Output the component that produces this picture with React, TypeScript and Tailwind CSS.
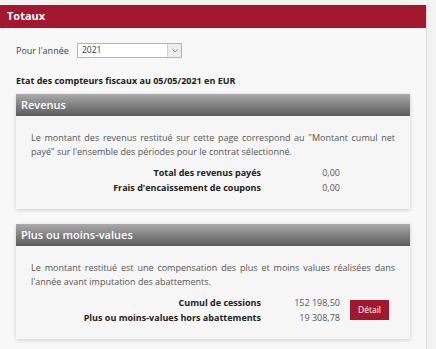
function Card({ title, children }: { title: string; children: React.ReactNode }) {
  return (
    <div className="shadow-[0_1px_4px_rgba(0,0,0,0.18)]">
      <div className="h-[22px] flex items-center px-[5px] bg-gradient-to-b from-[#ababab] to-[#5b5b5b] text-white font-semibold text-[11px]">
        {title}
      </div>
      <div className="bg-[#f6f6f6]">{children}</div>
    </div>
  );
}

function App() {
  return (
    <div className="w-[436px] h-[349px] overflow-hidden bg-[#f3f3f3] pt-[5px] text-[#333]" style={{ fontFamily: '"Open Sans", "Noto Sans", sans-serif' }}>
      <div className="w-[427px] h-[344px] bg-[#f8f8f8] border-r border-[#dcdcdc]">
        <div className="h-[23px] bg-[#a3182e] text-white font-bold text-[11px] flex items-center pl-[7px]">Totaux</div>

        <div className="px-[16px]">
          <div className="flex items-center mt-[15px] h-[15px]">
            <span className="text-[9px] text-[#444] w-[61px]">Pour l'année</span>
            <div className="w-[105px] h-[15px] border border-[#b5b5b5] bg-white flex items-center">
              <span className="flex-1 text-[8.5px] pl-[4px] text-[#333]">2021</span>
              <div className="w-[14px] h-full border-l border-[#cfcfcf] bg-[#eeeeee] flex items-center justify-center">
                <svg width="6" height="4" viewBox="0 0 6 4">
                  <path d="M0.5 0.5 L3 3 L5.5 0.5" fill="none" stroke="#888" strokeWidth="1" />
                </svg>
              </div>
            </div>
          </div>

          <div className="mt-[16px] text-[9px] font-bold text-[#222] leading-[14px]">
            Etat des compteurs fiscaux au 05/05/2021 en EUR
          </div>

          <div className="mt-[6px]">
            <Card title="Revenus">
              <div className="px-[15px] pt-[15px] pb-[14px]">
                <p className="text-[9px] leading-[14px] text-[#555] text-justify">
                  Le montant des revenus restitué sur cette page correspond au "Montant cumul net payé" sur l'ensemble des périodes pour le contrat sélectionné.
                </p>
                <div className="mt-[6px] text-[9px] leading-[15px]">
                  <div className="flex">
                    <span className="w-[230px] text-right font-bold text-[#222]">Total des revenus payés</span>
                    <span className="w-[79px] text-right text-[#555]">0,00</span>
                  </div>
                  <div className="flex">
                    <span className="w-[230px] text-right font-bold text-[#222]">Frais d'encaissement de coupons</span>
                    <span className="w-[79px] text-right text-[#555]">0,00</span>
                  </div>
                </div>
              </div>
            </Card>
          </div>

          <div className="mt-[15px]">
            <Card title="Plus ou moins-values">
              <div className="px-[15px] pt-[15px] pb-[14px]">
                <p className="text-[9px] leading-[13.5px] text-[#555] text-justify">
                  Le montant restitué est une compensation des plus et moins values réalisées dans l'année avant imputation des abattements.
                </p>
                <div className="mt-[7px] flex items-center">
                  <div className="text-[9px] leading-[15px]">
                    <div className="flex">
                      <span className="w-[230px] text-right font-bold text-[#222]">Cumul de cessions</span>
                      <span className="w-[79px] text-right text-[#555]">152 198,50</span>
                    </div>
                    <div className="flex">
                      <span className="w-[230px] text-right font-bold text-[#222]">Plus ou moins-values hors abattements</span>
                      <span className="w-[79px] text-right text-[#555]">19 308,78</span>
                    </div>
                  </div>
                  <button className="ml-[10px] w-[39px] h-[20px] bg-[#a3182e] text-white text-[8.5px] flex items-center justify-center">
                    Détail
                  </button>
                </div>
              </div>
            </Card>
          </div>
        </div>
      </div>
    </div>
  );
}

export default App
